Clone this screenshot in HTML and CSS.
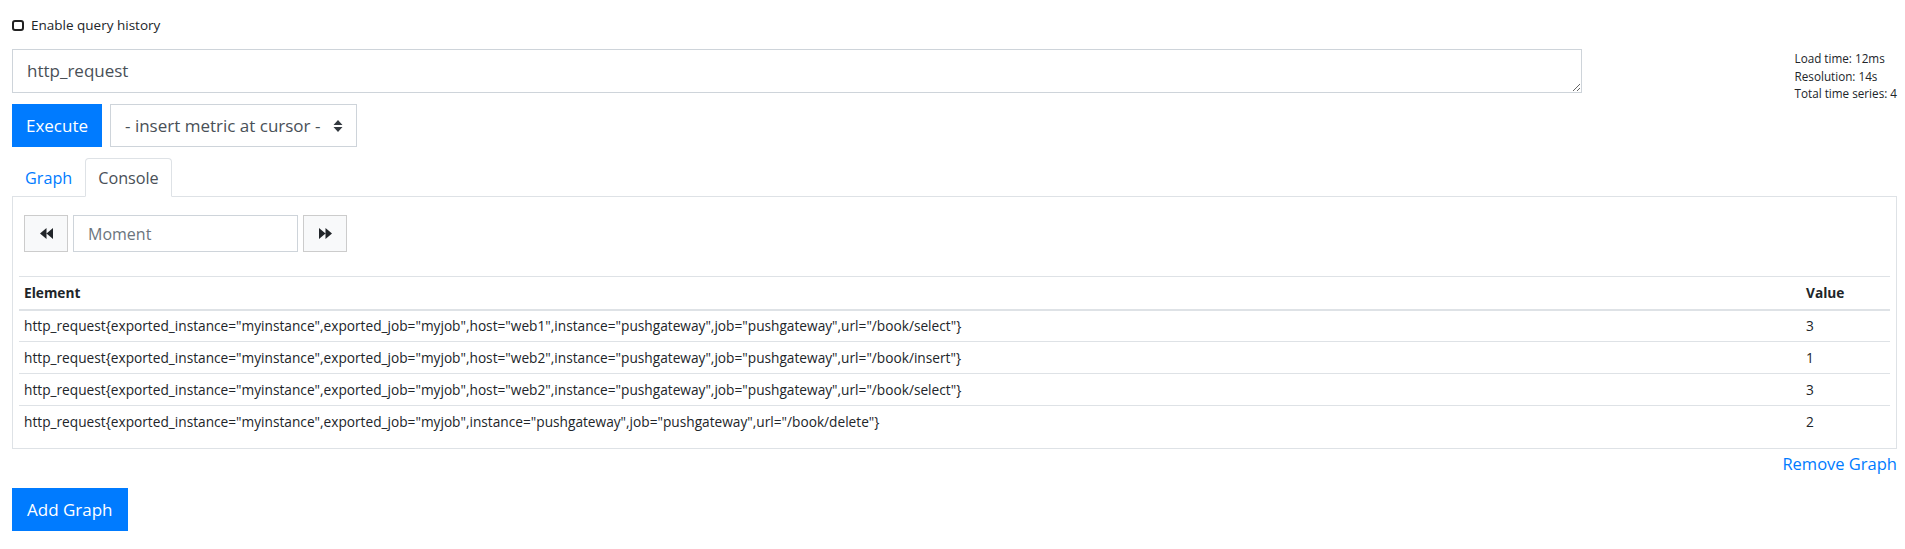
FILE: index.html
```html
<!DOCTYPE html>
<html>
<head>
<meta charset="utf-8">
<link rel="stylesheet" href="styles.css">
</head>
<body>
<div class="page">
  <label class="history"><span class="check"></span>Enable query history</label>
  <div class="top">
    <div class="query-col">
      <textarea class="expr" rows="1">http_request</textarea>
      <div class="actions">
        <button class="btn-primary exec">Execute</button>
        <div class="select">
          <span>- insert metric at cursor -</span>
          <svg width="10" height="14" viewBox="0 0 10 14"><path d="M5 1 L9.5 6 H0.5 Z M5 13 L0.5 8 H9.5 Z" fill="#343a40"/></svg>
        </div>
      </div>
    </div>
    <div class="stats">
      <div>Load time: 12ms</div>
      <div>Resolution: 14s</div>
      <div>Total time series: 4</div>
    </div>
  </div>
  <div class="tabs">
    <span class="tab">Graph</span>
    <span class="tab active">Console</span>
  </div>
  <div class="panel">
    <div class="controls">
      <button class="nav-btn"><svg width="13" height="11" viewBox="0 0 13 11"><path d="M0 5.5 L6.5 0 V11 Z M6.5 5.5 L13 0 V11 Z" fill="#212529"/></svg></button>
      <input class="moment" placeholder="Moment">
      <button class="nav-btn"><svg width="13" height="11" viewBox="0 0 13 11"><path d="M13 5.5 L6.5 0 V11 Z M6.5 5.5 L0 0 V11 Z" fill="#212529"/></svg></button>
    </div>
    <table class="results">
      <thead>
        <tr><th>Element</th><th class="val">Value</th></tr>
      </thead>
      <tbody>
        <tr><td>http_request{exported_instance="myinstance",exported_job="myjob",host="web1",instance="pushgateway",job="pushgateway",url="/book/select"}</td><td class="val">3</td></tr>
        <tr><td>http_request{exported_instance="myinstance",exported_job="myjob",host="web2",instance="pushgateway",job="pushgateway",url="/book/insert"}</td><td class="val">1</td></tr>
        <tr><td>http_request{exported_instance="myinstance",exported_job="myjob",host="web2",instance="pushgateway",job="pushgateway",url="/book/select"}</td><td class="val">3</td></tr>
        <tr><td>http_request{exported_instance="myinstance",exported_job="myjob",instance="pushgateway",job="pushgateway",url="/book/delete"}</td><td class="val">2</td></tr>
      </tbody>
    </table>
  </div>
  <div class="remove-row"><a class="remove">Remove Graph</a></div>
  <button class="btn-primary add">Add Graph</button>
</div>
</body>
</html>
```
FILE: styles.css
```css
* { box-sizing: border-box; }
body {
  margin: 0;
  font-family: "Open Sans", "Noto Sans", sans-serif;
  color: #212529;
  background: #fff;
}
.page {
  padding: 15px 8px 0 12px;
}
.history {
  display: flex;
  align-items: center;
  height: 20px;
  font-size: 13.5px;
}
.check {
  width: 12px;
  height: 11px;
  border: 2px solid #222;
  border-radius: 3px;
  margin-right: 7px;
}
.top {
  display: flex;
  margin-top: 14px;
}
.query-col {
  width: 1570px;
}
.expr {
  display: block;
  width: 100%;
  height: 44px;
  border: 1px solid #ced4da;
  padding: 8px 14px;
  font-family: inherit;
  font-size: 17px;
  line-height: 26px;
  color: #495057;
  resize: vertical;
  outline: none;
}
.actions {
  display: flex;
  gap: 8px;
  margin-top: 11px;
}
.btn-primary {
  height: 43px;
  border: 0;
  background: #007bff;
  color: #fff;
  font-family: inherit;
  font-size: 17px;
  padding: 0 15px;
  border-radius: 0;
}
.exec {
  width: 90px;
  padding: 0;
}
.select {
  display: flex;
  align-items: center;
  justify-content: space-between;
  width: 247px;
  height: 43px;
  border: 1px solid #ced4da;
  padding: 0 13px 0 14px;
  font-size: 17px;
  color: #495057;
}
.stats {
  margin-left: auto;
  padding-top: 1px;
  font-size: 11.7px;
  line-height: 17.5px;
}
.tabs {
  display: flex;
  margin-top: 11px;
  height: 39px;
  position: relative;
  z-index: 1;
}
.tab {
  padding: 0 12px;
  line-height: 38px;
  font-size: 16.2px;
  color: #007bff;
  border: 1px solid transparent;
  border-radius: 4px 4px 0 0;
}
.tab.active {
  color: #495057;
  background: #fff;
  border-color: #dee2e6 #dee2e6 #fff;
}
.panel {
  margin-top: -1px;
  border: 1px solid #dee2e6;
  padding: 18px 6px 10px;
  height: 253px;
}
.controls {
  display: flex;
  gap: 5px;
  margin-left: 5px;
  height: 37px;
}
.nav-btn {
  width: 44px;
  height: 37px;
  background: #f8f9fa;
  border: 1px solid #ccc;
  border-radius: 0;
  display: flex;
  align-items: center;
  justify-content: center;
  padding: 0;
}
.moment {
  width: 225px;
  height: 37px;
  border: 1px solid #ced4da;
  padding: 0 14px;
  font-family: inherit;
  font-size: 16px;
}
.moment::placeholder { color: #6c757d; }
.results {
  width: 100%;
  margin-top: 24px;
  border-collapse: collapse;
  font-size: 13.7px;
}
.results th {
  text-align: left;
  font-weight: 700;
  height: 33px;
  padding: 0 5px;
  border-top: 1px solid #dee2e6;
  border-bottom: 2px solid #dee2e6;
}
.results td {
  height: 32px;
  padding: 0 5px;
  border-top: 1px solid #dee2e6;
}
.results tbody tr:first-child td { border-top: 0; }
.results .val { width: 89px; }
.remove-row {
  display: flex;
  justify-content: flex-end;
  height: 25px;
  align-items: center;
  margin-top: 2px;
}
.remove {
  color: #007bff;
  font-size: 16.5px;
}
.add {
  margin-top: 12px;
  padding: 0 15px;
}
```
